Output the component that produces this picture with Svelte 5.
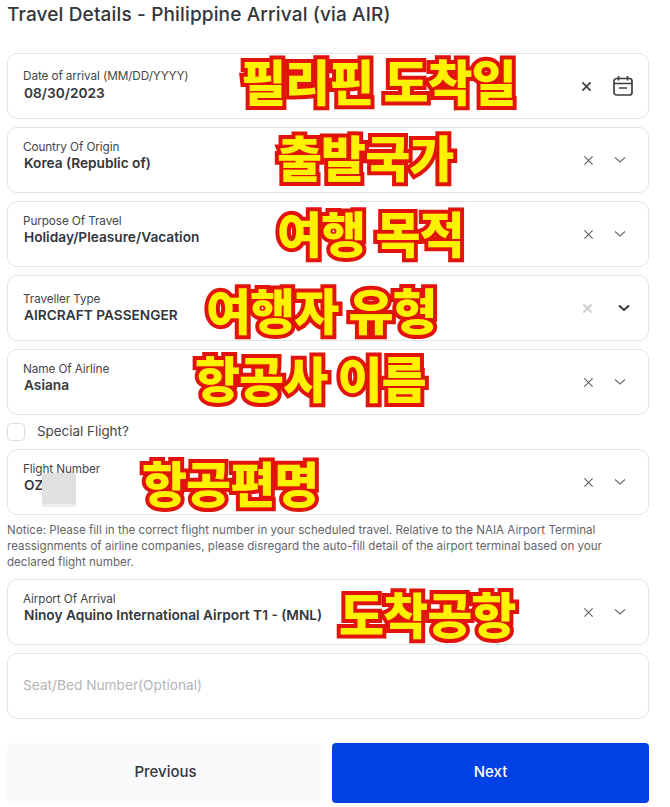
<script>
  const fields = [
    { label: 'Date of arrival (MM/DD/YYYY)', value: '08/30/2023', kind: 'date', tag: '필리핀 도착일', tagX: 233, tagY: -5 },
    { label: 'Country Of Origin', value: 'Korea (Republic of)', kind: 'select', tag: '출발국가', tagX: 269, tagY: -3 },
    { label: 'Purpose Of Travel', value: 'Holiday/Pleasure/Vacation', kind: 'select', tag: '여행 목적', tagX: 269, tagY: -1 },
    { label: 'Traveller Type', value: 'AIRCRAFT PASSENGER', kind: 'locked', tag: '여행자 유형', tagX: 198, tagY: 2 },
    { label: 'Name Of Airline', value: 'Asiana', kind: 'select', tag: '항공사 이름', tagX: 187, tagY: -4 }
  ];
  const after = [
    { label: 'Airport Of Arrival', value: 'Ninoy Aquino International Airport T1 - (MNL)', kind: 'select', tag: '도착공항', tagX: 331, tagY: 2 }
  ];
  const flight = { label: 'Flight Number', value: 'OZ', kind: 'select', tag: '항공편명', tagX: 134, tagY: 1, redact: true };
</script>

{#snippet field(f)}
  <div class="field">
    <div class="text {f.kind}">
      <div class="label">{f.label}</div>
      <div class="value">{f.value}</div>
    </div>
    {#if f.redact}<div class="redact"></div>{/if}
    <div class="icons">
      {#if f.kind === 'date'}
        <svg class="x strong" viewBox="0 0 12 12"><path d="M1.5 1.5l9 9M10.5 1.5l-9 9" /></svg>
        <svg class="cal" viewBox="0 0 20 20"><rect x="1" y="2.5" width="18" height="16.5" rx="2.5" /><path d="M1 7.5h18M5.5 0v4.5M14.5 0v4.5M6 12h8" /></svg>
      {:else if f.kind === 'locked'}
        <svg class="x locked" viewBox="0 0 12 12"><path d="M1.5 1.5l9 9M10.5 1.5l-9 9" /></svg>
        <svg class="chev dark" viewBox="0 0 12 8"><path d="M1 1.5l5 4.5 5-4.5" /></svg>
      {:else}
        <svg class="x" viewBox="0 0 12 12"><path d="M1.5 1.5l9 9M10.5 1.5l-9 9" /></svg>
        <svg class="chev" viewBox="0 0 12 8"><path d="M1 1.5l5 4.5 5-4.5" /></svg>
      {/if}
    </div>
    <span class="tag" style="left:{f.tagX}px;top:{f.tagY}px">{f.tag}</span>
  </div>
{/snippet}

<main>
  <h1>Travel Details - Philippine Arrival (via AIR)</h1>
  <div class="stack">
    {#each fields as f}
      {@render field(f)}
    {/each}
  </div>
  <label class="check"><span class="box"></span><span class="check-text">Special Flight?</span></label>
  {@render field(flight)}
  <p class="notice">Notice: Please fill in the correct flight number in your scheduled travel. Relative to the NAIA Airport Terminal reassignments of airline companies, please disregard the auto-fill detail of the airport terminal based on your declared flight number.</p>
  <div class="stack">
    {#each after as f}
      {@render field(f)}
    {/each}
    <div class="field placeholder"><span>Seat/Bed Number(Optional)</span></div>
  </div>
  <div class="actions">
    <button class="prev">Previous</button>
    <button class="next">Next</button>
  </div>
</main>

<style>
  :global(body) { margin: 0; background: #fff; }
  main {
    width: 642px;
    height: 807px;
    box-sizing: border-box;
    margin-left: 7px;
    padding-top: 4px;
    font-family: Inter, "Noto Sans", sans-serif;
    color: #2b2e33;
    overflow: hidden;
  }
  h1 {
    margin: 0 0 28px;
    font-size: 19px;
    line-height: 21px;
    font-weight: 500;
    letter-spacing: 0.15px;
    color: #33363b;
  }
  .stack { display: flex; flex-direction: column; gap: 8px; }
  .field {
    position: relative;
    height: 66px;
    box-sizing: border-box;
    border: 1px solid #e3e3e3;
    border-radius: 10px;
    display: flex;
    align-items: center;
    justify-content: space-between;
    padding: 0 15px 0 15px;
    background: #fff;
  }
  .text { display: flex; flex-direction: column; margin-top: -10px; }
  .text.date { margin-top: -3px; }
  .text.locked { margin-top: -2px; }
  .label { font-size: 11.75px; line-height: 16px; color: #43464b; letter-spacing: -0.1px; }
  .value { font-size: 13.7px; line-height: 17px; font-weight: 600; color: #33363b; margin-left: 1px; }
  .date .value { line-height: 18px; }
  .locked .value { line-height: 16px; }
  .icons { display: flex; align-items: center; gap: 20px; }
  svg { fill: none; display: block; }
  .x { width: 11px; height: 11px; stroke: #55585c; stroke-width: 1.1; }
  .x.strong { stroke: #3a3d42; stroke-width: 1.7; margin-right: 1px; }
  .x.locked { stroke: #c8c8c8; stroke-width: 2; margin-right: 3px; }
  .chev { width: 12px; height: 8px; stroke: #66696d; stroke-width: 1.1; margin-right: 7px; }
  .chev.dark { stroke: #33363b; stroke-width: 2; margin-right: 3px; margin-left: 2px; }
  .cal { width: 20px; height: 20px; stroke: #3a3d42; stroke-width: 1.7; margin-right: 0; }
  .tag {
    position: absolute;
    font-family: "Noto Sans CJK KR", sans-serif;
    font-size: 49px;
    line-height: 62px;
    font-weight: 900;
    color: #fff200;
    -webkit-text-stroke: 8px #e2130a;
    paint-order: stroke fill;
    white-space: nowrap;
    letter-spacing: -1px;
  }
  .redact {
    position: absolute;
    left: 34px;
    top: 23px;
    width: 34px;
    height: 34px;
    background: linear-gradient(#e0e0e0 0 31px, #ececec 31px);
    border-radius: 2px 0 0 2px;
  }
  .check {
    display: flex;
    align-items: center;
    gap: 12px;
    height: 18px;
    margin: 8px 0;
    font-size: 13.4px;
    color: #43464b;
  }
  .check-text { margin-top: -3px; }
  .box {
    width: 16px;
    height: 16px;
    border: 1px solid #e0e0e0;
    border-radius: 4px;
  }
  .notice {
    margin: 7px 0 9px;
    font-size: 11.6px;
    line-height: 16px;
    color: #63666b;
    height: 48px;
  }
  .placeholder { font-size: 13.7px; color: #b5b5b5; }
  .placeholder span { margin-top: -3px; }
  .actions { display: flex; gap: 8px; margin-top: 24px; }
  button {
    flex: 1;
    height: 60px;
    border: 0;
    border-radius: 4px;
    padding: 0 0 3px;
    font: 500 15px Inter, sans-serif;
  }
  .prev { background: #fafafd; color: #33363b; }
  .next { background: #0041e6; color: #fff; }
</style>
